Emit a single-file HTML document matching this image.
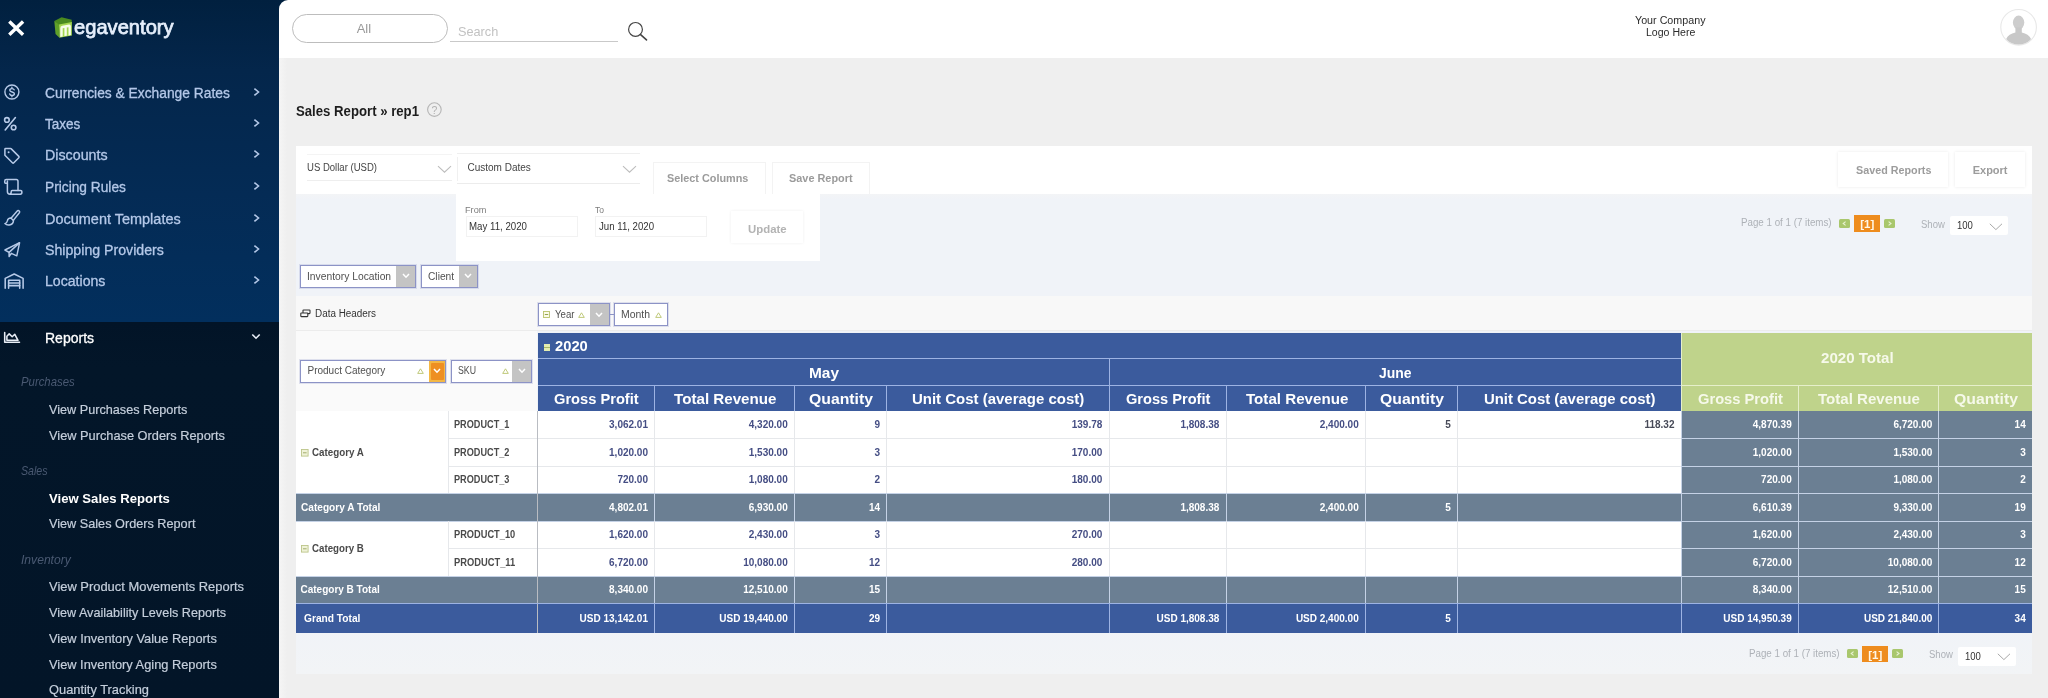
<!DOCTYPE html>
<html><head><meta charset="utf-8"><title>Sales Report</title><style>
html,body{margin:0;padding:0}
body{width:2048px;height:698px;overflow:hidden;position:relative;background:#efefef;font-family:"Liberation Sans", sans-serif;}
div,span,svg{position:absolute;display:block}
span{white-space:nowrap;line-height:1}
</style></head>
<body>
<div style="left:0px;top:0px;width:292px;height:322px;background:linear-gradient(180deg,#01203f 0%,#04264b 22%,#042b55 60%,#022f5d 100%);"></div>
<div style="left:0px;top:322px;width:279px;height:376px;background:linear-gradient(180deg,#021427 0%,#031629 12%,#031528 100%);"></div>
<div style="left:279px;top:0px;width:1769px;height:58px;background:#ffffff;border-top-left-radius:9px;"></div>
<div style="left:279px;top:58px;width:1769px;height:640px;background:#efefef;"></div>
<div style="left:279px;top:58px;width:8px;height:640px;background:linear-gradient(90deg,#f5f5f5,#efefef);"></div>
<div style="left:296px;top:146px;width:1736px;height:48px;background:#ffffff;"></div>
<div style="left:296px;top:194px;width:1736px;height:480px;background:linear-gradient(180deg,#f3f4f6 0px,#f0f3f8 5px,#f0f3f8 88%,#f2f4f6 100%);"></div>
<div style="left:296px;top:296px;width:1736px;height:35px;background:#f8f8f8;"></div>
<div style="left:296px;top:330px;width:1736px;height:1px;background:#ececec;"></div>
<div style="left:296px;top:331px;width:241px;height:80px;background:#fafafa;"></div>
<div style="left:456px;top:194px;width:364px;height:67px;background:#ffffff;"></div>
<div style="left:538px;top:333px;width:1143px;height:78.5px;background:#3b5b9d;"></div>
<div style="left:1681px;top:333px;width:351px;height:78.6px;background:#bfd38b;"></div>
<div style="left:296px;top:411px;width:1385px;height:222px;background:#ffffff;"></div>
<div style="left:1681px;top:411px;width:351px;height:222px;background:#6b7f93;"></div>
<div style="left:296px;top:493px;width:1385px;height:28px;background:#6b7f93;"></div>
<div style="left:296px;top:576px;width:1385px;height:27px;background:#6b7f93;"></div>
<div style="left:296px;top:603px;width:1736px;height:30px;background:#3b5b9d;"></div>
<div style="left:538px;top:358px;width:1143px;height:1px;background:#9db3e3;"></div>
<div style="left:538px;top:385px;width:1143px;height:1px;background:#9db3e3;"></div>
<div style="left:1681px;top:385px;width:351px;height:1px;background:#e6efcb;"></div>
<div style="left:1109px;top:359px;width:1px;height:52px;background:#9db3e3;"></div>
<div style="left:654px;top:386px;width:1px;height:25px;background:#9db3e3;"></div>
<div style="left:794px;top:386px;width:1px;height:25px;background:#9db3e3;"></div>
<div style="left:886px;top:386px;width:1px;height:25px;background:#9db3e3;"></div>
<div style="left:1226px;top:386px;width:1px;height:25px;background:#9db3e3;"></div>
<div style="left:1365px;top:386px;width:1px;height:25px;background:#9db3e3;"></div>
<div style="left:1457px;top:386px;width:1px;height:25px;background:#9db3e3;"></div>
<div style="left:1681px;top:333px;width:1px;height:78px;background:#e6efcb;"></div>
<div style="left:1798px;top:386px;width:1px;height:25px;background:#e6efcb;"></div>
<div style="left:1938px;top:386px;width:1px;height:25px;background:#e6efcb;"></div>
<div style="left:448px;top:438px;width:1233px;height:1px;background:#e6e8eb;"></div>
<div style="left:1681px;top:438px;width:351px;height:1px;background:#c5d2e6;"></div>
<div style="left:448px;top:466px;width:1233px;height:1px;background:#e6e8eb;"></div>
<div style="left:1681px;top:466px;width:351px;height:1px;background:#c5d2e6;"></div>
<div style="left:296px;top:493px;width:1385px;height:1px;background:#c5d2e6;"></div>
<div style="left:1681px;top:493px;width:351px;height:1px;background:#c5d2e6;"></div>
<div style="left:296px;top:521px;width:1385px;height:1px;background:#c5d2e6;"></div>
<div style="left:1681px;top:521px;width:351px;height:1px;background:#c5d2e6;"></div>
<div style="left:448px;top:548px;width:1233px;height:1px;background:#e6e8eb;"></div>
<div style="left:1681px;top:548px;width:351px;height:1px;background:#c5d2e6;"></div>
<div style="left:296px;top:576px;width:1385px;height:1px;background:#c5d2e6;"></div>
<div style="left:1681px;top:576px;width:351px;height:1px;background:#c5d2e6;"></div>
<div style="left:296px;top:603px;width:1385px;height:1px;background:#c5d2e6;"></div>
<div style="left:1681px;top:603px;width:351px;height:1px;background:#c5d2e6;"></div>
<div style="left:448px;top:411px;width:1px;height:82px;background:#e6e8eb;"></div>
<div style="left:448px;top:521px;width:1px;height:55px;background:#e6e8eb;"></div>
<div style="left:537px;top:411px;width:1px;height:222px;background:#b9bcc2;"></div>
<div style="left:654px;top:411px;width:1px;height:82px;background:#e6e8eb;"></div>
<div style="left:654px;top:521px;width:1px;height:55px;background:#e6e8eb;"></div>
<div style="left:654px;top:493px;width:1px;height:28px;background:#c5d2e6;"></div>
<div style="left:654px;top:576px;width:1px;height:27px;background:#c5d2e6;"></div>
<div style="left:654px;top:603px;width:1px;height:30px;background:#9db3e3;"></div>
<div style="left:794px;top:411px;width:1px;height:82px;background:#e6e8eb;"></div>
<div style="left:794px;top:521px;width:1px;height:55px;background:#e6e8eb;"></div>
<div style="left:794px;top:493px;width:1px;height:28px;background:#c5d2e6;"></div>
<div style="left:794px;top:576px;width:1px;height:27px;background:#c5d2e6;"></div>
<div style="left:794px;top:603px;width:1px;height:30px;background:#9db3e3;"></div>
<div style="left:886px;top:411px;width:1px;height:82px;background:#e6e8eb;"></div>
<div style="left:886px;top:521px;width:1px;height:55px;background:#e6e8eb;"></div>
<div style="left:886px;top:493px;width:1px;height:28px;background:#c5d2e6;"></div>
<div style="left:886px;top:576px;width:1px;height:27px;background:#c5d2e6;"></div>
<div style="left:886px;top:603px;width:1px;height:30px;background:#9db3e3;"></div>
<div style="left:1109px;top:411px;width:1px;height:82px;background:#e6e8eb;"></div>
<div style="left:1109px;top:521px;width:1px;height:55px;background:#e6e8eb;"></div>
<div style="left:1109px;top:493px;width:1px;height:28px;background:#c5d2e6;"></div>
<div style="left:1109px;top:576px;width:1px;height:27px;background:#c5d2e6;"></div>
<div style="left:1109px;top:603px;width:1px;height:30px;background:#9db3e3;"></div>
<div style="left:1226px;top:411px;width:1px;height:82px;background:#e6e8eb;"></div>
<div style="left:1226px;top:521px;width:1px;height:55px;background:#e6e8eb;"></div>
<div style="left:1226px;top:493px;width:1px;height:28px;background:#c5d2e6;"></div>
<div style="left:1226px;top:576px;width:1px;height:27px;background:#c5d2e6;"></div>
<div style="left:1226px;top:603px;width:1px;height:30px;background:#9db3e3;"></div>
<div style="left:1365px;top:411px;width:1px;height:82px;background:#e6e8eb;"></div>
<div style="left:1365px;top:521px;width:1px;height:55px;background:#e6e8eb;"></div>
<div style="left:1365px;top:493px;width:1px;height:28px;background:#c5d2e6;"></div>
<div style="left:1365px;top:576px;width:1px;height:27px;background:#c5d2e6;"></div>
<div style="left:1365px;top:603px;width:1px;height:30px;background:#9db3e3;"></div>
<div style="left:1457px;top:411px;width:1px;height:82px;background:#e6e8eb;"></div>
<div style="left:1457px;top:521px;width:1px;height:55px;background:#e6e8eb;"></div>
<div style="left:1457px;top:493px;width:1px;height:28px;background:#c5d2e6;"></div>
<div style="left:1457px;top:576px;width:1px;height:27px;background:#c5d2e6;"></div>
<div style="left:1457px;top:603px;width:1px;height:30px;background:#9db3e3;"></div>
<div style="left:1681px;top:411px;width:1px;height:192px;background:#c5d2e6;"></div>
<div style="left:1681px;top:603px;width:1px;height:30px;background:#9db3e3;"></div>
<div style="left:1798px;top:411px;width:1px;height:192px;background:#c5d2e6;"></div>
<div style="left:1798px;top:603px;width:1px;height:30px;background:#9db3e3;"></div>
<div style="left:1938px;top:411px;width:1px;height:192px;background:#c5d2e6;"></div>
<div style="left:1938px;top:603px;width:1px;height:30px;background:#9db3e3;"></div>
<div style="left:296px;top:603px;width:1736px;height:1px;background:#9db3e3;"></div>
<div style="left:292px;top:14px;width:156px;height:29px;background:#ffffff;border:1px solid #bdbdbd;border-radius:15px;box-sizing:border-box;"></div>
<div style="left:450px;top:41px;width:168px;height:1px;background:#c9c9c9;"></div>
<div style="left:307px;top:180px;width:145px;height:1px;background:#eeeeee;"></div>
<div style="left:307px;top:154px;width:145px;height:1px;background:#f4f4f4;"></div>
<div style="left:457px;top:157px;width:1px;height:24px;background:#f0f0f0;"></div>
<div style="left:457px;top:153px;width:183px;height:1px;background:#efefef;"></div>
<div style="left:457px;top:183px;width:183px;height:1px;background:#ececec;"></div>
<div style="left:653px;top:162px;width:113px;height:32px;background:#ffffff;border:1px solid #f3f3f3;border-bottom:none;box-sizing:border-box;"></div>
<div style="left:772px;top:162px;width:98px;height:32px;background:#ffffff;border:1px solid #f3f3f3;border-bottom:none;box-sizing:border-box;"></div>
<div style="left:1838px;top:152px;width:110px;height:35px;background:#ffffff;box-shadow:0 0 3px rgba(0,0,0,.09);"></div>
<div style="left:1955px;top:152px;width:70px;height:35px;background:#ffffff;box-shadow:0 0 3px rgba(0,0,0,.09);"></div>
<div style="left:466px;top:216px;width:112px;height:21px;background:#ffffff;border:1px solid #f2f2f2;box-sizing:border-box;"></div>
<div style="left:595px;top:216px;width:112px;height:21px;background:#ffffff;border:1px solid #f2f2f2;box-sizing:border-box;"></div>
<div style="left:731px;top:211px;width:72px;height:32px;background:#ffffff;box-shadow:0 0 3px rgba(0,0,0,.07);"></div>
<div style="left:1862px;top:645.7px;width:26px;height:16.4px;background:#ee8c1e;"></div>
<div style="left:1957.5px;top:646.8px;width:58px;height:19.1px;background:#ffffff;border-radius:2px;"></div>
<div style="left:1854px;top:215.20000000000005px;width:26px;height:16.4px;background:#ee8c1e;"></div>
<div style="left:1949.5px;top:216.29999999999995px;width:58px;height:19.1px;background:#ffffff;border-radius:2px;"></div>
<div style="left:300px;top:264.5px;width:116px;height:23px;background:#ffffff;border:1px solid #8c93c6;box-sizing:border-box;box-shadow:0 0 0 1px rgba(140,147,198,.25);"></div>
<div style="left:396px;top:265.5px;width:19px;height:21px;background:#c4c4c4;"></div>
<div style="left:421px;top:264.5px;width:57px;height:23px;background:#ffffff;border:1px solid #8c93c6;box-sizing:border-box;box-shadow:0 0 0 1px rgba(140,147,198,.25);"></div>
<div style="left:459px;top:265.5px;width:18px;height:21px;background:#c4c4c4;"></div>
<div style="left:537.5px;top:303px;width:72px;height:23px;background:#ffffff;border:1px solid #8c93c6;box-sizing:border-box;box-shadow:0 0 0 1px rgba(140,147,198,.25);"></div>
<div style="left:590.0px;top:304px;width:18.5px;height:21px;background:#c4c4c4;"></div>
<div style="left:610px;top:314px;width:4px;height:1px;background:#8c93c6;"></div>
<div style="left:614px;top:303px;width:54px;height:23px;background:#ffffff;border:1px solid #8c93c6;box-sizing:border-box;box-shadow:0 0 0 1px rgba(140,147,198,.25);"></div>
<div style="left:300px;top:359.5px;width:146px;height:23px;background:#ffffff;border:1px solid #8c93c6;box-sizing:border-box;box-shadow:0 0 0 1px rgba(140,147,198,.25);"></div>
<div style="left:429px;top:360.5px;width:16px;height:21px;background:#eea42a;"></div>
<div style="left:429px;top:360.5px;width:16px;height:21px;background:#f4b845;"></div>
<div style="left:431px;top:362.5px;width:12.5px;height:17px;background:#ee8f22;border-radius:1px;"></div>
<div style="left:451px;top:359.5px;width:81px;height:23px;background:#ffffff;border:1px solid #8c93c6;box-sizing:border-box;box-shadow:0 0 0 1px rgba(140,147,198,.25);"></div>
<div style="left:512px;top:360.5px;width:19px;height:21px;background:#c4c4c4;"></div>
<div style="left:543.5px;top:344.3px;width:6.6px;height:6.4px;background:#e3ecb0;"></div>
<div style="left:543.5px;top:347px;width:6.6px;height:1px;background:#a9b866;"></div>
<svg style="left:253px;top:86.8px;" width="8" height="10" viewBox="0 0 8 10"><path d="M1.4 1.6 L5.5 5 L1.4 8.4" fill="none" stroke="#b4c8e8" stroke-width="1.6"/></svg>
<svg style="left:253px;top:117.8px;" width="8" height="10" viewBox="0 0 8 10"><path d="M1.4 1.6 L5.5 5 L1.4 8.4" fill="none" stroke="#b4c8e8" stroke-width="1.6"/></svg>
<svg style="left:253px;top:148.8px;" width="8" height="10" viewBox="0 0 8 10"><path d="M1.4 1.6 L5.5 5 L1.4 8.4" fill="none" stroke="#b4c8e8" stroke-width="1.6"/></svg>
<svg style="left:253px;top:180.8px;" width="8" height="10" viewBox="0 0 8 10"><path d="M1.4 1.6 L5.5 5 L1.4 8.4" fill="none" stroke="#b4c8e8" stroke-width="1.6"/></svg>
<svg style="left:253px;top:212.8px;" width="8" height="10" viewBox="0 0 8 10"><path d="M1.4 1.6 L5.5 5 L1.4 8.4" fill="none" stroke="#b4c8e8" stroke-width="1.6"/></svg>
<svg style="left:253px;top:243.8px;" width="8" height="10" viewBox="0 0 8 10"><path d="M1.4 1.6 L5.5 5 L1.4 8.4" fill="none" stroke="#b4c8e8" stroke-width="1.6"/></svg>
<svg style="left:253px;top:274.8px;" width="8" height="10" viewBox="0 0 8 10"><path d="M1.4 1.6 L5.5 5 L1.4 8.4" fill="none" stroke="#b4c8e8" stroke-width="1.6"/></svg>
<svg style="left:251px;top:332px;" width="10" height="9" viewBox="0 0 10 9"><path d="M1.3 2.5 L5 6.2 L8.7 2.5" fill="none" stroke="#e8eef8" stroke-width="1.6"/></svg>
<svg style="left:1847.1px;top:649.2px;" width="11" height="9" viewBox="0 0 11 9"><rect x="0" y="0" width="11" height="9" rx="1.5" fill="#a9c76d"/><path d="M6.6 2.6 L4.2 4.5 L6.6 6.4" fill="none" stroke="#e9f3d3" stroke-width="1.100"/></svg>
<svg style="left:1892.0px;top:649.2px;" width="11" height="9" viewBox="0 0 11 9"><rect x="0" y="0" width="11" height="9" rx="1.5" fill="#a9c76d"/><path d="M4.6 2.6 L7 4.5 L4.6 6.4" fill="none" stroke="#e9f3d3" stroke-width="1.100"/></svg>
<svg style="left:1996.5px;top:653.4px;" width="14" height="8" viewBox="0 0 14 8"><path d="M0.8 0.8 L6.9 6.6 L13 0.8" fill="none" stroke="#a8a8a8" stroke-width="1"/></svg>
<svg style="left:1839.1px;top:218.70000000000005px;" width="11" height="9" viewBox="0 0 11 9"><rect x="0" y="0" width="11" height="9" rx="1.5" fill="#a9c76d"/><path d="M6.6 2.6 L4.2 4.5 L6.6 6.4" fill="none" stroke="#e9f3d3" stroke-width="1.100"/></svg>
<svg style="left:1884.0px;top:218.70000000000005px;" width="11" height="9" viewBox="0 0 11 9"><rect x="0" y="0" width="11" height="9" rx="1.5" fill="#a9c76d"/><path d="M4.6 2.6 L7 4.5 L4.6 6.4" fill="none" stroke="#e9f3d3" stroke-width="1.100"/></svg>
<svg style="left:1988.5px;top:222.89999999999998px;" width="14" height="8" viewBox="0 0 14 8"><path d="M0.8 0.8 L6.9 6.6 L13 0.8" fill="none" stroke="#a8a8a8" stroke-width="1"/></svg>
<svg style="left:401.5px;top:273.0px;" width="8" height="6" viewBox="0 0 8 6"><path d="M1 1 L4 4.2 L7 1" fill="none" stroke="#ffffff" stroke-width="1.5"/></svg>
<svg style="left:464.0px;top:273.0px;" width="8" height="6" viewBox="0 0 8 6"><path d="M1 1 L4 4.2 L7 1" fill="none" stroke="#ffffff" stroke-width="1.5"/></svg>
<svg style="left:595.25px;top:311.5px;" width="8" height="6" viewBox="0 0 8 6"><path d="M1 1 L4 4.2 L7 1" fill="none" stroke="#ffffff" stroke-width="1.5"/></svg>
<svg style="left:578px;top:311.5px;" width="7" height="6" viewBox="0 0 7 6"><path d="M3.5 0.8 L6.3 5.4 L0.7 5.4 Z" fill="none" stroke="#b9c36c" stroke-width="0.9"/></svg>
<svg style="left:543px;top:311.0px;" width="7" height="7" viewBox="0 0 7 7"><rect x="0.5" y="0.5" width="6" height="6" fill="#fbfbe8" stroke="#b9c36c" stroke-width="0.9"/><path d="M1.8 3.5h3.4" stroke="#8a9a3c" stroke-width="0.9"/></svg>
<svg style="left:654.5px;top:311.5px;" width="7" height="6" viewBox="0 0 7 6"><path d="M3.5 0.8 L6.3 5.4 L0.7 5.4 Z" fill="none" stroke="#b9c36c" stroke-width="0.9"/></svg>
<svg style="left:433.0px;top:368.0px;" width="8" height="6" viewBox="0 0 8 6"><path d="M1 1 L4 4.2 L7 1" fill="none" stroke="#ffffff" stroke-width="1.5"/></svg>
<svg style="left:417px;top:368.0px;" width="7" height="6" viewBox="0 0 7 6"><path d="M3.5 0.8 L6.3 5.4 L0.7 5.4 Z" fill="none" stroke="#b9c36c" stroke-width="0.9"/></svg>
<svg style="left:517.5px;top:368.0px;" width="8" height="6" viewBox="0 0 8 6"><path d="M1 1 L4 4.2 L7 1" fill="none" stroke="#ffffff" stroke-width="1.5"/></svg>
<svg style="left:502px;top:368.0px;" width="7" height="6" viewBox="0 0 7 6"><path d="M3.5 0.8 L6.3 5.4 L0.7 5.4 Z" fill="none" stroke="#b9c36c" stroke-width="0.9"/></svg>
<svg style="left:300px;top:309px;" width="11" height="9" viewBox="0 0 11 9"><rect x="3" y="1" width="7" height="3.6" rx="0.6" fill="none" stroke="#333" stroke-width="1.1"/><rect x="0.8" y="4" width="7" height="3.6" rx="0.6" fill="#f8f8f8" stroke="#333" stroke-width="1.1"/></svg>
<svg style="left:300.5px;top:448.5px;" width="8" height="8" viewBox="0 0 8 8"><rect x="0.5" y="0.5" width="6.6" height="6.6" fill="#eff2d8" stroke="#bcc58a" stroke-width="0.9"/><path d="M2 3.8h3.6" stroke="#9aa560" stroke-width="0.9"/></svg>
<svg style="left:300.5px;top:544.5px;" width="8" height="8" viewBox="0 0 8 8"><rect x="0.5" y="0.5" width="6.6" height="6.6" fill="#eff2d8" stroke="#bcc58a" stroke-width="0.9"/><path d="M2 3.8h3.6" stroke="#9aa560" stroke-width="0.9"/></svg>
<svg style="left:3px;top:83px;" width="18" height="18" viewBox="0 0 18 18"><g fill="none" stroke="#b7cae8" stroke-width="1.4" stroke-linecap="round" stroke-linejoin="round"><circle cx="8.9" cy="9" r="7"/><path d="M11.2 6.9c-.3-.9-1.1-1.3-2.2-1.3-1.3 0-2.2.7-2.2 1.7 0 2.3 4.6 1.1 4.6 3.5 0 1-.9 1.7-2.3 1.7-1.200 0-2.100-.5-2.400-1.500M8.900 4.300v1.300M8.900 12.500v1.300"/></g></svg>
<svg style="left:3px;top:116px;" width="15" height="16" viewBox="0 0 15 16"><g fill="none" stroke="#b7cae8" stroke-width="1.6" stroke-linecap="round" stroke-linejoin="round"><circle cx="3.900" cy="3.900" r="2.300"/><circle cx="10.600" cy="11.500" r="2.300"/><path d="M12.400 1.600 L2.200 13.900"/></g></svg>
<svg style="left:3px;top:146.5px;" width="18" height="18" viewBox="0 0 18 18"><g fill="none" stroke="#b7cae8" stroke-width="1.5" stroke-linecap="round" stroke-linejoin="round"><path d="M1.900 2.200 L1.900 8.300 L9.400 15.800 Q10.100 16.500 10.800 15.800 L15.800 10.800 Q16.500 10.100 15.800 9.400 L8.300 1.900 Q8.000 1.600 7.600 1.600 L2.500 1.600 Q1.900 1.600 1.900 2.200 Z"/><circle cx="5.600" cy="5.300" r="1.000" fill="#b7cae8" stroke="none"/></g></svg>
<svg style="left:3px;top:178px;" width="21" height="18" viewBox="0 0 21 18"><g fill="none" stroke="#b7cae8" stroke-width="1.5" stroke-linecap="round" stroke-linejoin="round"><path d="M4.300 5.300 L2.500 5.300 Q1.700 5.300 1.700 4.300 L1.700 3.200 Q1.700 1.600 3.300 1.600 L13.300 1.600 Q15.000 1.600 15.000 3.400 L15.000 12.400"/><path d="M4.400 3.000 L4.400 13.600 Q4.400 16.200 7.000 16.200 L17.300 16.200 Q18.900 16.200 18.900 14.300 L18.900 13.700 Q18.900 12.500 17.700 12.500 L9.200 12.500 Q8.200 12.500 8.200 13.800 Q8.200 16.200 6.500 16.200"/></g></svg>
<svg style="left:3px;top:209px;" width="18" height="18" viewBox="0 0 18 18"><g fill="none" stroke="#b7cae8" stroke-width="1.45" stroke-linecap="round" stroke-linejoin="round"><path d="M8.000 9.200 L14.000 2.200 Q15.200 0.900 16.200 1.900 Q17.200 2.900 16.000 4.200 L10.300 11.400"/><path d="M7.800 9.000 Q4.800 9.000 4.300 12.000 Q4.000 14.000 1.900 14.600 Q3.600 16.400 6.300 16.000 Q10.200 15.300 10.500 11.600 Z"/></g></svg>
<svg style="left:3px;top:241px;" width="19" height="18" viewBox="0 0 19 18"><g fill="none" stroke="#b7cae8" stroke-width="1.45" stroke-linecap="round" stroke-linejoin="round"><path d="M1.900 9.000 L16.600 1.700 L13.800 14.800 L8.300 12.300 L6.100 15.600 L6.100 11.400 Z"/><path d="M6.100 11.400 L16.400 1.900"/></g></svg>
<svg style="left:3px;top:271.5px;" width="22" height="18" viewBox="0 0 22 18"><g fill="none" stroke="#b7cae8" stroke-width="1.55" stroke-linecap="round" stroke-linejoin="round"><path d="M2.200 16.200 L2.200 6.400 L11.200 2.000 L20.100 6.400 L20.100 16.200"/><path d="M5.600 16.200 L5.600 8.300 L16.700 8.300 L16.700 16.200"/><path d="M5.600 11.000 H16.700 M5.600 13.600 H16.700"/></g></svg>
<svg style="left:3px;top:331px;" width="18" height="13" viewBox="0 0 18 13"><g fill="none" stroke="#e9eef6" stroke-width="1.55" stroke-linecap="round" stroke-linejoin="round"><path d="M1.700 1.400 L1.700 11.300 L16.500 11.300"/><path d="M3.900 9.300 L3.900 5.200 L6.200 2.900 L9.200 5.800 L11.800 3.300 L15.000 9.300 Z"/></g></svg>
<svg style="left:6px;top:18px;" width="21" height="20" viewBox="0 0 21 20"><path d="M3.300 3.500 L17.100 16.700 M17.100 3.500 L3.300 16.700" fill="none" stroke="#ffffff" stroke-width="3.4" stroke-linecap="butt"/></svg>
<svg style="left:53px;top:15.5px;" width="21" height="23" viewBox="0 0 21 23"><path d="M1.3 4.9 L8.6 1.3 L18.7 3.7 L18.9 7 L6 9.4 Z" fill="#4a8a1f"/><path d="M1.3 4.9 L6 8.6 L6.4 21.8 L2.5 17.9 Z" fill="#5f9f29"/><path d="M6 8.6 L18.9 6 L18.9 19.4 L6.4 21.8 Z" fill="#a3d550"/><path d="M7.3 20.9 L7.3 12.2 Q7.3 10.2 9.2 9.8 L15.9 8.5 Q17.9 8.2 17.9 10.3 L17.9 18.9 L15.5 19.4 L15.5 11.3 L13.8 11.6 L13.8 19.7 L11.4 20.1 L11.4 12 L9.7 12.3 L9.7 20.4 Z" fill="#f6fce8"/></svg>
<svg style="left:626px;top:20px;" width="23" height="22" viewBox="0 0 23 22"><circle cx="9.5" cy="9.4" r="6.9" fill="none" stroke="#454545" stroke-width="1.2"/><path d="M14.6 14.600 L20.5 19.9" stroke="#454545" stroke-width="1.6" stroke-linecap="round"/></svg>
<svg style="left:426px;top:101px;" width="17" height="17" viewBox="0 0 17 17"><circle cx="8.400" cy="8.600" r="6.800" fill="none" stroke="#b5b5b5" stroke-width="1.100"/></svg>
<svg style="left:1999px;top:8px;" width="40" height="40" viewBox="0 0 40 40"><defs><clipPath id="av"><circle cx="19.6" cy="19.3" r="17.2"/></clipPath></defs><circle cx="19.6" cy="19.3" r="17.8" fill="#ffffff" stroke="#e8e8e8" stroke-width="1.1"/><g clip-path="url(#av)"><ellipse cx="19.6" cy="14.6" rx="5.7" ry="7" fill="#cdcdcd"/><path d="M16.4 19.5 L16.4 24.5 Q9.5 26.2 7.4 30.5 L7.4 40 L31.8 40 L31.8 30.5 Q29.7 26.200 22.8 24.5 L22.8 19.5 Z" fill="#c8c8c8"/></g></svg>
<svg style="left:436.5px;top:164.5px;" width="15" height="9" viewBox="0 0 15 9"><path d="M1.000 1.200 L7.500 7.200 L14.000 1.200" fill="none" stroke="#bdbdbd" stroke-width="1.1"/></svg>
<svg style="left:621.5px;top:164.5px;" width="15" height="9" viewBox="0 0 15 9"><path d="M1.000 1.200 L7.500 7.200 L14.000 1.200" fill="none" stroke="#bdbdbd" stroke-width="1.1"/></svg>
<div id="tx" style="left:0;top:0;width:2048px;height:698px;will-change:transform;">
<span style="top:86.01px;font-size:14px;color:#b4c8e8;-webkit-text-stroke:0.3px #b4c8e8;left:44.80px;transform-origin:0 0;transform:scaleX(0.9854);">Currencies &amp; Exchange Rates</span>
<span style="top:117.01px;font-size:14px;color:#b4c8e8;-webkit-text-stroke:0.3px #b4c8e8;left:44.80px;transform-origin:0 0;transform:scaleX(0.9651);">Taxes</span>
<span style="top:148.00px;font-size:14px;color:#b4c8e8;-webkit-text-stroke:0.3px #b4c8e8;left:44.80px;transform-origin:0 0;transform:scaleX(1.0184);">Discounts</span>
<span style="top:180.01px;font-size:14px;color:#b4c8e8;-webkit-text-stroke:0.3px #b4c8e8;left:44.80px;transform-origin:0 0;transform:scaleX(0.9808);">Pricing Rules</span>
<span style="top:212.01px;font-size:14px;color:#b4c8e8;-webkit-text-stroke:0.3px #b4c8e8;left:44.80px;transform-origin:0 0;transform:scaleX(1.0339);">Document Templates</span>
<span style="top:243.01px;font-size:14px;color:#b4c8e8;-webkit-text-stroke:0.3px #b4c8e8;left:44.80px;transform-origin:0 0;transform:scaleX(1.0118);">Shipping Providers</span>
<span style="top:274.01px;font-size:14px;color:#b4c8e8;-webkit-text-stroke:0.3px #b4c8e8;left:44.80px;transform-origin:0 0;transform:scaleX(1.0077);">Locations</span>
<span style="top:331.01px;font-size:14px;color:#ffffff;-webkit-text-stroke:0.3px #ffffff;left:45.00px;transform-origin:0 0;">Reports</span>
<span style="top:375.00px;font-size:13px;color:#4a5972;font-style:italic;left:21.10px;transform-origin:0 0;transform:scaleX(0.8743);">Purchases</span>
<span style="top:464.01px;font-size:13px;color:#4a5972;font-style:italic;left:21.10px;transform-origin:0 0;transform:scaleX(0.8177);">Sales</span>
<span style="top:553.01px;font-size:13px;color:#4a5972;font-style:italic;left:21.10px;transform-origin:0 0;transform:scaleX(0.9311);">Inventory</span>
<span style="top:403.00px;font-size:13px;color:#c4cedb;-webkit-text-stroke:0.2px #c4cedb;left:48.90px;transform-origin:0 0;transform:scaleX(0.9739);">View Purchases Reports</span>
<span style="top:429.00px;font-size:13px;color:#c4cedb;-webkit-text-stroke:0.2px #c4cedb;left:48.90px;transform-origin:0 0;transform:scaleX(0.9835);">View Purchase Orders Reports</span>
<span style="top:492.00px;font-size:13px;color:#ffffff;font-weight:700;left:48.90px;transform-origin:0 0;transform:scaleX(1.0099);">View Sales Reports</span>
<span style="top:517.00px;font-size:13px;color:#c4cedb;-webkit-text-stroke:0.2px #c4cedb;left:48.90px;transform-origin:0 0;transform:scaleX(0.9757);">View Sales Orders Report</span>
<span style="top:580.00px;font-size:13px;color:#c4cedb;-webkit-text-stroke:0.2px #c4cedb;left:48.90px;transform-origin:0 0;transform:scaleX(0.9934);">View Product Movements Reports</span>
<span style="top:606.00px;font-size:13px;color:#c4cedb;-webkit-text-stroke:0.2px #c4cedb;left:48.90px;transform-origin:0 0;transform:scaleX(0.9707);">View Availability Levels Reports</span>
<span style="top:632.00px;font-size:13px;color:#c4cedb;-webkit-text-stroke:0.2px #c4cedb;left:48.90px;transform-origin:0 0;transform:scaleX(0.9867);">View Inventory Value Reports</span>
<span style="top:658.00px;font-size:13px;color:#c4cedb;-webkit-text-stroke:0.2px #c4cedb;left:48.90px;transform-origin:0 0;transform:scaleX(0.9852);">View Inventory Aging Reports</span>
<span style="top:683.01px;font-size:13px;color:#c4cedb;-webkit-text-stroke:0.2px #c4cedb;left:48.90px;transform-origin:0 0;transform:scaleX(0.9886);">Quantity Tracking</span>
<span style="top:17.01px;font-size:20.6px;color:#e6effc;-webkit-text-stroke:0.75px #e6effc;left:73.60px;transform-origin:0 0;transform:scaleX(0.9774);">egaventory</span>
<span style="top:22.00px;font-size:13px;color:#9a9a9a;left:363.90px;transform-origin:0 0;transform:translateX(-50%);">All</span>
<span style="top:25.00px;font-size:13px;color:#c2c2c2;left:457.50px;transform-origin:0 0;transform:scaleX(0.9781);">Search</span>
<span style="top:16.00px;font-size:10px;color:#2b2b2b;left:1635.40px;transform-origin:0 0;transform:scaleX(1.0717);">Your Company</span>
<span style="top:28.01px;font-size:10px;color:#2b2b2b;left:1645.90px;transform-origin:0 0;transform:scaleX(1.0556);">Logo Here</span>
<span style="top:104.01px;font-size:14.5px;color:#1d1d1d;font-weight:700;left:295.60px;transform-origin:0 0;transform:scaleX(0.9084);">Sales Report » rep1</span>
<span style="top:163.02px;font-size:10px;color:#444;left:306.60px;transform-origin:0 0;transform:scaleX(0.9544);">US Dollar (USD)</span>
<span style="top:163.02px;font-size:10px;color:#444;left:467.50px;transform-origin:0 0;">Custom Dates</span>
<span style="top:173.00px;font-size:11px;color:#9b9b9b;font-weight:700;left:667.00px;transform-origin:0 0;transform:scaleX(0.9863);">Select Columns</span>
<span style="top:173.00px;font-size:11px;color:#9b9b9b;font-weight:700;left:789.20px;transform-origin:0 0;transform:scaleX(0.9906);">Save Report</span>
<span style="top:165.00px;font-size:11px;color:#9c9c9c;font-weight:700;left:1856.00px;transform-origin:0 0;transform:scaleX(0.9788);">Saved Reports</span>
<span style="top:165.00px;font-size:11px;color:#9c9c9c;font-weight:700;left:1972.70px;transform-origin:0 0;">Export</span>
<span style="top:206.01px;font-size:9px;color:#7d7d7d;left:465.20px;transform-origin:0 0;transform:scaleX(1.0190);">From</span>
<span style="top:206.01px;font-size:9px;color:#7d7d7d;left:594.70px;transform-origin:0 0;transform:scaleX(0.9458);">To</span>
<span style="top:222.00px;font-size:10px;color:#333;left:469.00px;transform-origin:0 0;transform:scaleX(0.9689);">May 11, 2020</span>
<span style="top:222.00px;font-size:10px;color:#333;left:598.50px;transform-origin:0 0;transform:scaleX(0.9651);">Jun 11, 2020</span>
<span style="top:224.01px;font-size:11px;color:#b3b3b3;font-weight:700;left:748.20px;transform-origin:0 0;transform:scaleX(1.0354);">Update</span>
<span style="top:649.00px;font-size:10px;color:#adb1b7;left:1749.40px;transform-origin:0 0;transform:scaleX(0.9760);">Page 1 of 1 (7 items)</span>
<span style="top:650.01px;font-size:11.5px;color:#fff7e8;font-weight:700;left:1875.30px;transform-origin:0 0;transform:translateX(-50%);">[1]</span>
<span style="top:650.00px;font-size:10px;color:#adb1b7;left:1928.80px;transform-origin:0 0;transform:scaleX(0.9514);">Show</span>
<span style="top:652.01px;font-size:10px;color:#333;left:1965.00px;transform-origin:0 0;transform:scaleX(0.9528);">100</span>
<span style="top:218.00px;font-size:10px;color:#adb1b7;left:1741.40px;transform-origin:0 0;transform:scaleX(0.9760);">Page 1 of 1 (7 items)</span>
<span style="top:219.01px;font-size:11.5px;color:#fff7e8;font-weight:700;left:1867.30px;transform-origin:0 0;transform:translateX(-50%);">[1]</span>
<span style="top:220.00px;font-size:10px;color:#adb1b7;left:1920.80px;transform-origin:0 0;transform:scaleX(0.9514);">Show</span>
<span style="top:221.01px;font-size:10px;color:#333;left:1957.00px;transform-origin:0 0;transform:scaleX(0.9528);">100</span>
<span style="top:272.00px;font-size:10px;color:#505050;left:307.00px;transform-origin:0 0;transform:scaleX(1.0291);">Inventory Location</span>
<span style="top:272.00px;font-size:10px;color:#505050;left:428.00px;transform-origin:0 0;transform:scaleX(1.0204);">Client</span>
<span style="top:310.00px;font-size:10px;color:#505050;left:554.80px;transform-origin:0 0;transform:scaleX(0.9645);">Year</span>
<span style="top:310.00px;font-size:10px;color:#505050;left:621.40px;transform-origin:0 0;transform:scaleX(1.0433);">Month</span>
<span style="top:366.01px;font-size:10px;color:#505050;left:307.50px;transform-origin:0 0;">Product Category</span>
<span style="top:366.01px;font-size:10px;color:#505050;left:458.00px;transform-origin:0 0;transform:scaleX(0.8754);">SKU</span>
<span style="top:309.00px;font-size:10px;color:#333;left:314.80px;transform-origin:0 0;transform:scaleX(0.9886);">Data Headers</span>
<span style="top:339.00px;font-size:14.5px;color:#ffffff;font-weight:700;left:554.90px;transform-origin:0 0;transform:scaleX(1.0166);">2020</span>
<span style="top:366.01px;font-size:14.5px;color:#ffffff;font-weight:700;left:809.00px;transform-origin:0 0;transform:scaleX(1.0631);">May</span>
<span style="top:366.01px;font-size:14.5px;color:#ffffff;font-weight:700;left:1378.90px;transform-origin:0 0;transform:scaleX(0.9633);">June</span>
<span style="top:392.00px;font-size:14.5px;color:#ffffff;font-weight:700;left:554.30px;transform-origin:0 0;transform:scaleX(1.0108);">Gross Profit</span>
<span style="top:392.00px;font-size:14.5px;color:#ffffff;font-weight:700;left:673.60px;transform-origin:0 0;transform:scaleX(1.0456);">Total Revenue</span>
<span style="top:392.00px;font-size:14.5px;color:#ffffff;font-weight:700;left:808.90px;transform-origin:0 0;transform:scaleX(1.0865);">Quantity</span>
<span style="top:392.00px;font-size:14.5px;color:#ffffff;font-weight:700;left:912.40px;transform-origin:0 0;transform:scaleX(1.0324);">Unit Cost (average cost)</span>
<span style="top:392.00px;font-size:14.5px;color:#ffffff;font-weight:700;left:1125.80px;transform-origin:0 0;transform:scaleX(1.0072);">Gross Profit</span>
<span style="top:392.00px;font-size:14.5px;color:#ffffff;font-weight:700;left:1245.60px;transform-origin:0 0;transform:scaleX(1.0435);">Total Revenue</span>
<span style="top:392.00px;font-size:14.5px;color:#ffffff;font-weight:700;left:1380.40px;transform-origin:0 0;transform:scaleX(1.0865);">Quantity</span>
<span style="top:392.00px;font-size:14.5px;color:#ffffff;font-weight:700;left:1484.40px;transform-origin:0 0;transform:scaleX(1.0276);">Unit Cost (average cost)</span>
<span style="top:351.00px;font-size:14.5px;color:#f6f9ea;font-weight:700;left:1820.70px;transform-origin:0 0;transform:scaleX(1.0407);">2020 Total</span>
<span style="top:392.01px;font-size:14.5px;color:#f6f9ea;font-weight:700;left:1697.90px;transform-origin:0 0;transform:scaleX(1.0132);">Gross Profit</span>
<span style="top:392.01px;font-size:14.5px;color:#f6f9ea;font-weight:700;left:1818.20px;transform-origin:0 0;transform:scaleX(1.0395);">Total Revenue</span>
<span style="top:392.01px;font-size:14.5px;color:#f6f9ea;font-weight:700;left:1953.70px;transform-origin:0 0;transform:scaleX(1.0882);">Quantity</span>
<span style="top:420.00px;font-size:10px;color:#4a4a4a;font-weight:700;left:454.40px;transform-origin:0 0;transform:scaleX(0.9145);">PRODUCT_1</span>
<span style="top:448.01px;font-size:10px;color:#4a4a4a;font-weight:700;left:454.40px;transform-origin:0 0;transform:scaleX(0.9145);">PRODUCT_2</span>
<span style="top:475.01px;font-size:10px;color:#4a4a4a;font-weight:700;left:454.40px;transform-origin:0 0;transform:scaleX(0.9145);">PRODUCT_3</span>
<span style="top:530.01px;font-size:10px;color:#4a4a4a;font-weight:700;left:454.40px;transform-origin:0 0;transform:scaleX(0.9253);">PRODUCT_10</span>
<span style="top:558.01px;font-size:10px;color:#4a4a4a;font-weight:700;left:454.40px;transform-origin:0 0;transform:scaleX(0.9332);">PRODUCT_11</span>
<span style="top:448.01px;font-size:10px;color:#4a4a4a;font-weight:700;left:312.40px;transform-origin:0 0;transform:scaleX(0.9795);">Category A</span>
<span style="top:544.01px;font-size:10px;color:#4a4a4a;font-weight:700;left:312.40px;transform-origin:0 0;transform:scaleX(0.9727);">Category B</span>
<span style="top:503.01px;font-size:10px;color:#ffffff;font-weight:700;left:300.50px;transform-origin:0 0;transform:scaleX(1.0111);">Category A Total</span>
<span style="top:585.01px;font-size:10px;color:#ffffff;font-weight:700;left:300.50px;transform-origin:0 0;">Category B Total</span>
<span style="top:614.00px;font-size:10px;color:#ffffff;font-weight:700;left:304.00px;transform-origin:0 0;transform:scaleX(1.0185);">Grand Total</span>
<span style="top:420.00px;font-size:10px;color:#454e84;font-weight:700;right:1400.00px;transform-origin:100% 0;">3,062.01</span>
<span style="top:420.00px;font-size:10px;color:#454e84;font-weight:700;right:1260.30px;transform-origin:100% 0;">4,320.00</span>
<span style="top:420.00px;font-size:10px;color:#454e84;font-weight:700;right:1168.00px;transform-origin:100% 0;">9</span>
<span style="top:420.00px;font-size:10px;color:#454e84;font-weight:700;right:945.70px;transform-origin:100% 0;">139.78</span>
<span style="top:420.00px;font-size:10px;color:#454e84;font-weight:700;right:828.70px;transform-origin:100% 0;">1,808.38</span>
<span style="top:420.00px;font-size:10px;color:#454e84;font-weight:700;right:689.30px;transform-origin:100% 0;">2,400.00</span>
<span style="top:420.00px;font-size:10px;color:#474a58;font-weight:700;right:597.30px;transform-origin:100% 0;">5</span>
<span style="top:420.00px;font-size:10px;color:#474a58;font-weight:700;right:373.50px;transform-origin:100% 0;">118.32</span>
<span style="top:420.00px;font-size:10px;color:#ffffff;font-weight:700;right:256.30px;transform-origin:100% 0;">4,870.39</span>
<span style="top:420.00px;font-size:10px;color:#ffffff;font-weight:700;right:115.70px;transform-origin:100% 0;">6,720.00</span>
<span style="top:420.00px;font-size:10px;color:#ffffff;font-weight:700;right:22.30px;transform-origin:100% 0;">14</span>
<span style="top:448.01px;font-size:10px;color:#454e84;font-weight:700;right:1400.00px;transform-origin:100% 0;">1,020.00</span>
<span style="top:448.01px;font-size:10px;color:#454e84;font-weight:700;right:1260.30px;transform-origin:100% 0;">1,530.00</span>
<span style="top:448.01px;font-size:10px;color:#454e84;font-weight:700;right:1168.00px;transform-origin:100% 0;">3</span>
<span style="top:448.01px;font-size:10px;color:#454e84;font-weight:700;right:945.70px;transform-origin:100% 0;">170.00</span>
<span style="top:448.01px;font-size:10px;color:#ffffff;font-weight:700;right:256.30px;transform-origin:100% 0;">1,020.00</span>
<span style="top:448.01px;font-size:10px;color:#ffffff;font-weight:700;right:115.70px;transform-origin:100% 0;">1,530.00</span>
<span style="top:448.01px;font-size:10px;color:#ffffff;font-weight:700;right:22.30px;transform-origin:100% 0;">3</span>
<span style="top:475.01px;font-size:10px;color:#454e84;font-weight:700;right:1400.00px;transform-origin:100% 0;">720.00</span>
<span style="top:475.01px;font-size:10px;color:#454e84;font-weight:700;right:1260.30px;transform-origin:100% 0;">1,080.00</span>
<span style="top:475.01px;font-size:10px;color:#454e84;font-weight:700;right:1168.00px;transform-origin:100% 0;">2</span>
<span style="top:475.01px;font-size:10px;color:#454e84;font-weight:700;right:945.70px;transform-origin:100% 0;">180.00</span>
<span style="top:475.01px;font-size:10px;color:#ffffff;font-weight:700;right:256.30px;transform-origin:100% 0;">720.00</span>
<span style="top:475.01px;font-size:10px;color:#ffffff;font-weight:700;right:115.70px;transform-origin:100% 0;">1,080.00</span>
<span style="top:475.01px;font-size:10px;color:#ffffff;font-weight:700;right:22.30px;transform-origin:100% 0;">2</span>
<span style="top:503.01px;font-size:10px;color:#ffffff;font-weight:700;right:1400.00px;transform-origin:100% 0;">4,802.01</span>
<span style="top:503.01px;font-size:10px;color:#ffffff;font-weight:700;right:1260.30px;transform-origin:100% 0;">6,930.00</span>
<span style="top:503.01px;font-size:10px;color:#ffffff;font-weight:700;right:1168.00px;transform-origin:100% 0;">14</span>
<span style="top:503.01px;font-size:10px;color:#ffffff;font-weight:700;right:828.70px;transform-origin:100% 0;">1,808.38</span>
<span style="top:503.01px;font-size:10px;color:#ffffff;font-weight:700;right:689.30px;transform-origin:100% 0;">2,400.00</span>
<span style="top:503.01px;font-size:10px;color:#ffffff;font-weight:700;right:597.30px;transform-origin:100% 0;">5</span>
<span style="top:503.01px;font-size:10px;color:#ffffff;font-weight:700;right:256.30px;transform-origin:100% 0;">6,610.39</span>
<span style="top:503.01px;font-size:10px;color:#ffffff;font-weight:700;right:115.70px;transform-origin:100% 0;">9,330.00</span>
<span style="top:503.01px;font-size:10px;color:#ffffff;font-weight:700;right:22.30px;transform-origin:100% 0;">19</span>
<span style="top:530.01px;font-size:10px;color:#454e84;font-weight:700;right:1400.00px;transform-origin:100% 0;">1,620.00</span>
<span style="top:530.01px;font-size:10px;color:#454e84;font-weight:700;right:1260.30px;transform-origin:100% 0;">2,430.00</span>
<span style="top:530.01px;font-size:10px;color:#454e84;font-weight:700;right:1168.00px;transform-origin:100% 0;">3</span>
<span style="top:530.01px;font-size:10px;color:#454e84;font-weight:700;right:945.70px;transform-origin:100% 0;">270.00</span>
<span style="top:530.01px;font-size:10px;color:#ffffff;font-weight:700;right:256.30px;transform-origin:100% 0;">1,620.00</span>
<span style="top:530.01px;font-size:10px;color:#ffffff;font-weight:700;right:115.70px;transform-origin:100% 0;">2,430.00</span>
<span style="top:530.01px;font-size:10px;color:#ffffff;font-weight:700;right:22.30px;transform-origin:100% 0;">3</span>
<span style="top:558.01px;font-size:10px;color:#454e84;font-weight:700;right:1400.00px;transform-origin:100% 0;">6,720.00</span>
<span style="top:558.01px;font-size:10px;color:#454e84;font-weight:700;right:1260.30px;transform-origin:100% 0;">10,080.00</span>
<span style="top:558.01px;font-size:10px;color:#454e84;font-weight:700;right:1168.00px;transform-origin:100% 0;">12</span>
<span style="top:558.01px;font-size:10px;color:#454e84;font-weight:700;right:945.70px;transform-origin:100% 0;">280.00</span>
<span style="top:558.01px;font-size:10px;color:#ffffff;font-weight:700;right:256.30px;transform-origin:100% 0;">6,720.00</span>
<span style="top:558.01px;font-size:10px;color:#ffffff;font-weight:700;right:115.70px;transform-origin:100% 0;">10,080.00</span>
<span style="top:558.01px;font-size:10px;color:#ffffff;font-weight:700;right:22.30px;transform-origin:100% 0;">12</span>
<span style="top:585.01px;font-size:10px;color:#ffffff;font-weight:700;right:1400.00px;transform-origin:100% 0;">8,340.00</span>
<span style="top:585.01px;font-size:10px;color:#ffffff;font-weight:700;right:1260.30px;transform-origin:100% 0;">12,510.00</span>
<span style="top:585.01px;font-size:10px;color:#ffffff;font-weight:700;right:1168.00px;transform-origin:100% 0;">15</span>
<span style="top:585.01px;font-size:10px;color:#ffffff;font-weight:700;right:256.30px;transform-origin:100% 0;">8,340.00</span>
<span style="top:585.01px;font-size:10px;color:#ffffff;font-weight:700;right:115.70px;transform-origin:100% 0;">12,510.00</span>
<span style="top:585.01px;font-size:10px;color:#ffffff;font-weight:700;right:22.30px;transform-origin:100% 0;">15</span>
<span style="top:614.00px;font-size:10px;color:#ffffff;font-weight:700;right:1400.00px;transform-origin:100% 0;">USD 13,142.01</span>
<span style="top:614.00px;font-size:10px;color:#ffffff;font-weight:700;right:1260.30px;transform-origin:100% 0;">USD 19,440.00</span>
<span style="top:614.00px;font-size:10px;color:#ffffff;font-weight:700;right:1168.00px;transform-origin:100% 0;">29</span>
<span style="top:614.00px;font-size:10px;color:#ffffff;font-weight:700;right:828.70px;transform-origin:100% 0;">USD 1,808.38</span>
<span style="top:614.00px;font-size:10px;color:#ffffff;font-weight:700;right:689.30px;transform-origin:100% 0;">USD 2,400.00</span>
<span style="top:614.00px;font-size:10px;color:#ffffff;font-weight:700;right:597.30px;transform-origin:100% 0;">5</span>
<span style="top:614.00px;font-size:10px;color:#ffffff;font-weight:700;right:256.30px;transform-origin:100% 0;">USD 14,950.39</span>
<span style="top:614.00px;font-size:10px;color:#ffffff;font-weight:700;right:115.70px;transform-origin:100% 0;">USD 21,840.00</span>
<span style="top:614.00px;font-size:10px;color:#ffffff;font-weight:700;right:22.30px;transform-origin:100% 0;">34</span>
<span style="top:105.01px;font-size:10.5px;color:#b0b0b0;left:434.50px;transform-origin:0 0;transform:translateX(-50%);">?</span>
</div>
</body></html>
